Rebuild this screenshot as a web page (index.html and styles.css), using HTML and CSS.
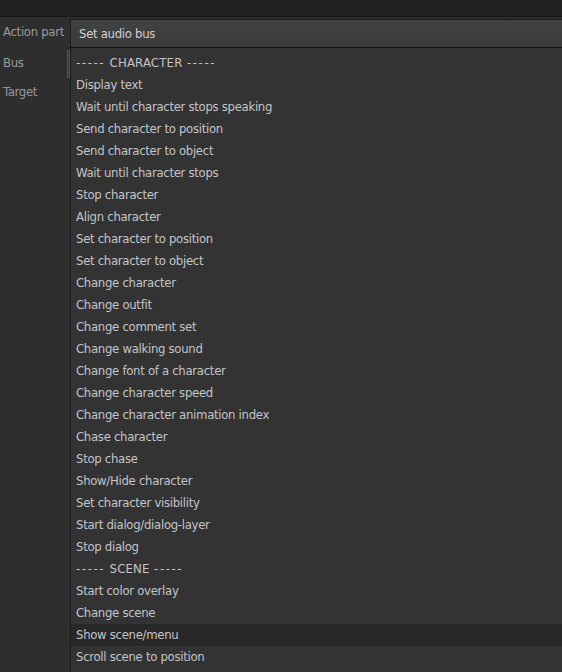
FILE: index.html
```html
<!DOCTYPE html>
<html>
<head>
<meta charset="utf-8">
<link rel="stylesheet" href="styles.css">
</head>
<body>
<div class="topbar"></div>
<div class="main">
  <div class="labels">
    <div class="label label-action">Action part</div>
    <div class="label label-bus">Bus</div>
    <div class="label label-target">Target</div>
    <div class="thumb"></div>
  </div>
  <div class="content">
    <div class="combo">Set audio bus</div>
    <ul class="list">
      <li class="heading"><span class="dash">-----</span> <span class="caps">CHARACTER</span> <span class="dash">-----</span></li>
      <li>Display text</li>
      <li>Wait until character stops speaking</li>
      <li>Send character to position</li>
      <li>Send character to object</li>
      <li>Wait until character stops</li>
      <li>Stop character</li>
      <li>Align character</li>
      <li>Set character to position</li>
      <li>Set character to object</li>
      <li>Change character</li>
      <li>Change outfit</li>
      <li>Change comment set</li>
      <li>Change walking sound</li>
      <li>Change font of a character</li>
      <li>Change character speed</li>
      <li>Change character animation index</li>
      <li>Chase character</li>
      <li>Stop chase</li>
      <li>Show/Hide character</li>
      <li>Set character visibility</li>
      <li>Start dialog/dialog-layer</li>
      <li>Stop dialog</li>
      <li class="heading"><span class="dash">-----</span> <span class="caps">SCENE</span> <span class="dash">-----</span></li>
      <li>Start color overlay</li>
      <li>Change scene</li>
      <li class="active">Show scene/menu</li>
      <li>Scroll scene to position</li>
    </ul>
  </div>
</div>
</body>
</html>
```
FILE: styles.css
```css
html, body {
  margin: 0;
  padding: 0;
  height: 100%;
  overflow: hidden;
}
body {
  background: #2e2e2e;
  font-family: "DejaVu Sans Condensed", "DejaVu Sans", sans-serif;
  font-stretch: condensed;
  font-size: 13px;
  letter-spacing: -0.3px;
}
.topbar {
  height: 16px;
  background: #222222;
  border-bottom: 1px solid #171717;
}
.main {
  display: grid;
  grid-template-columns: 70px 1fr;
  height: 660px;
  overflow: hidden;
}
.labels {
  position: relative;
  padding-top: 6px;
  color: #9a9a9a;
}
.label {
  padding-left: 3px;
  height: 18px;
  line-height: 18px;
  white-space: nowrap;
}
.label-bus { margin-top: 13px; }
.label-target { margin-top: 11px; }
.thumb {
  position: absolute;
  left: 67px;
  top: 33px;
  width: 1px;
  height: 26px;
  border: 1px solid #555555;
  border-radius: 1px;
  background: #3a3a3a;
}
.content {
  padding-top: 2px;
}
.combo {
  height: 27px;
  line-height: 28px;
  border-top: 1px solid #1d1d1d;
  border-left: 1px solid #1d1d1d;
  background: linear-gradient(#424242, #3b3b3b);
  color: #d0d0d0;
  padding-left: 8px;
}
.list {
  list-style: none;
  margin: 0;
  padding: 4px 0 0 0;
  border-top: 1px solid #161616;
  border-left: 1px solid #1d1d1d;
  background: #333333;
  height: 700px;
}
.list li {
  height: 22px;
  line-height: 22px;
  padding-left: 5px;
  color: #c2c5c9;
  white-space: nowrap;
}
.list li.active {
  background: #282828;
}
.heading {
  word-spacing: 1px;
}
.dash {
  letter-spacing: 1.6px;
}
.caps {
  letter-spacing: 0.2px;
}
```
